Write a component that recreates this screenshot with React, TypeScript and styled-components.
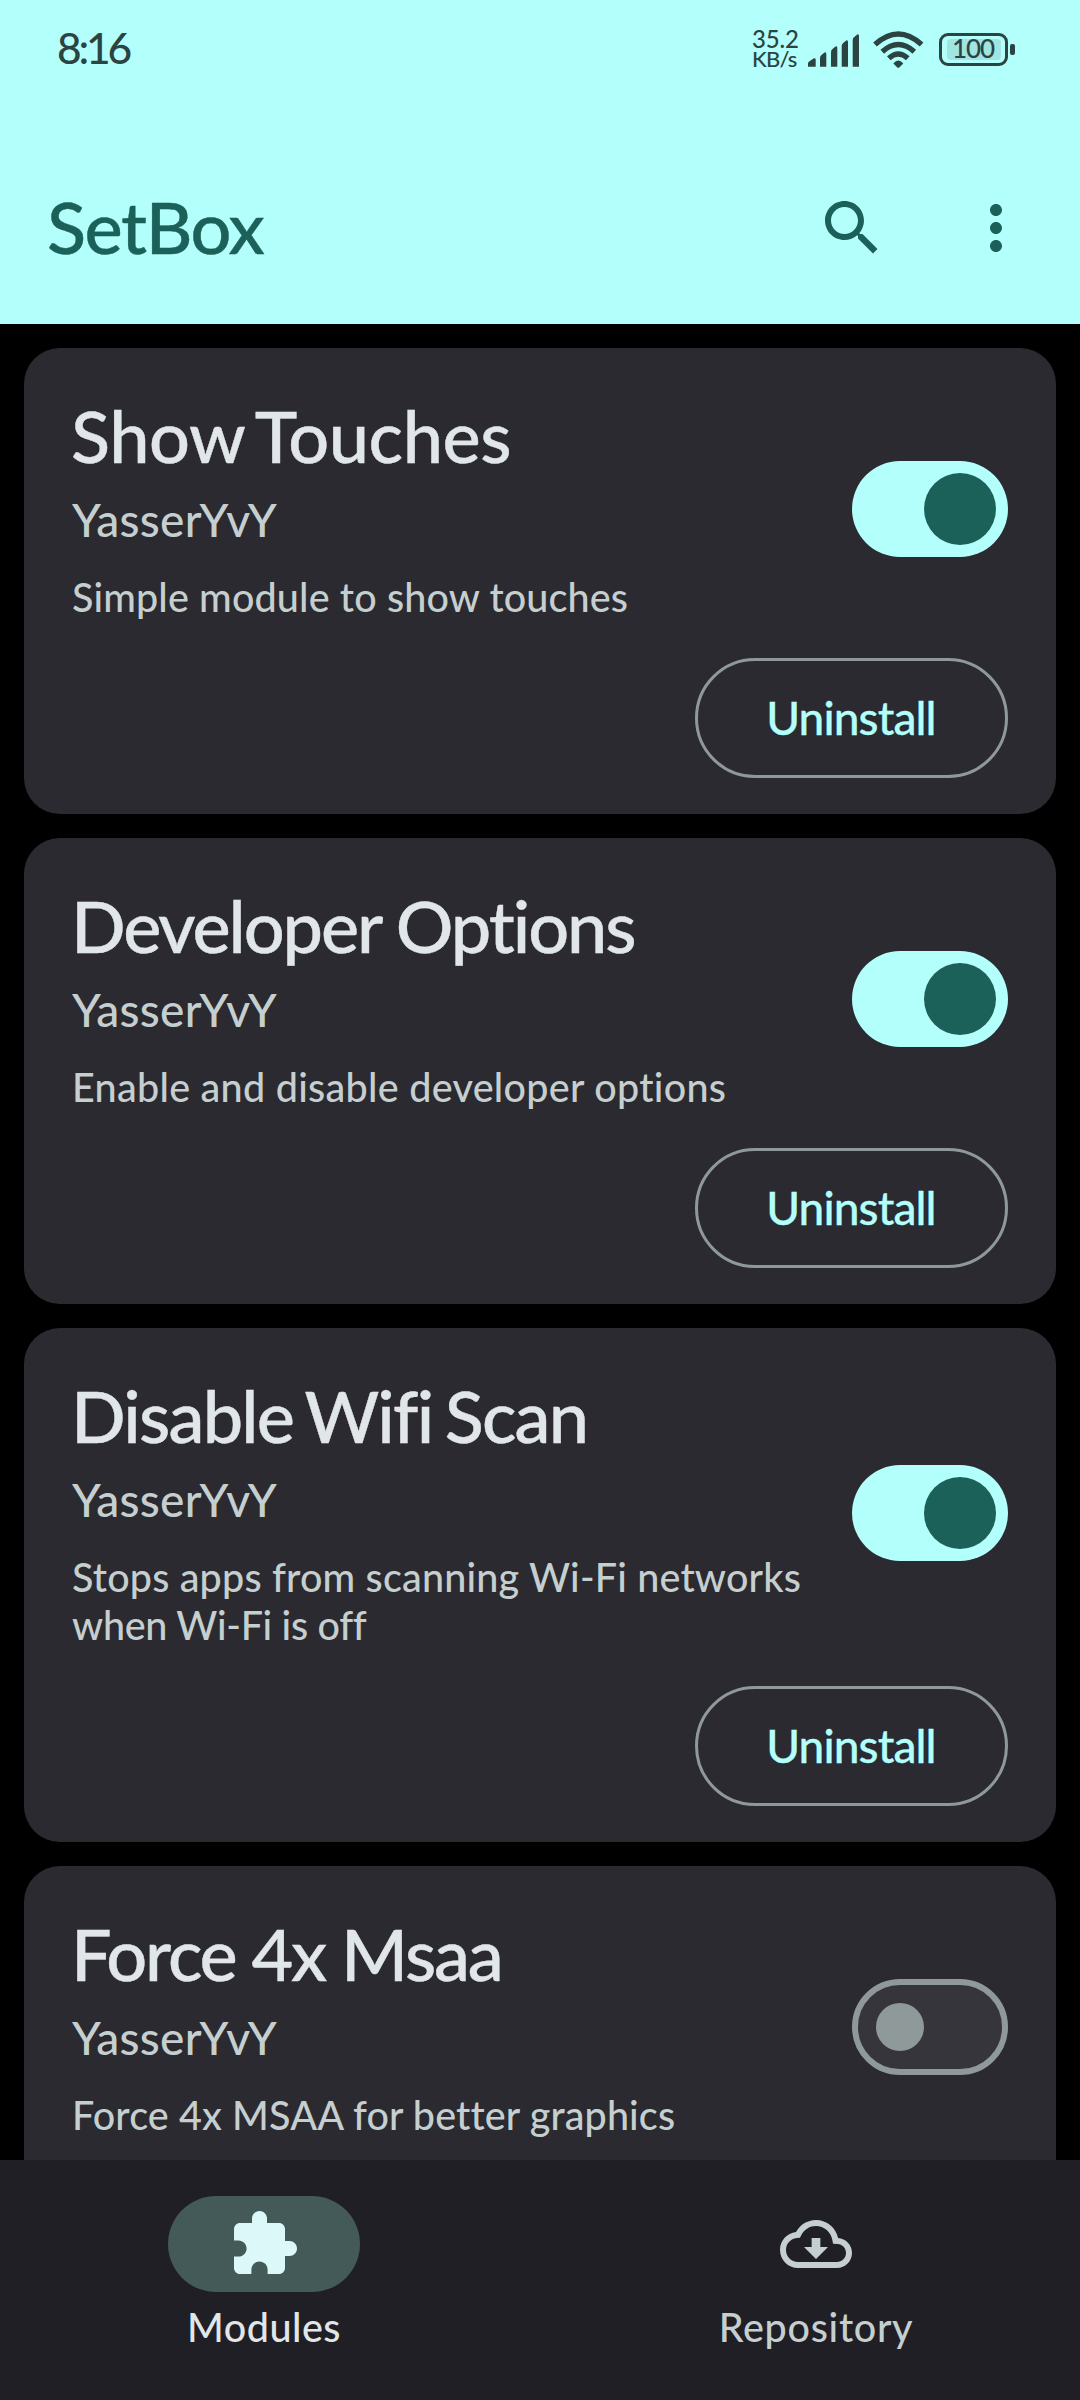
import React from "react";
import styled, { createGlobalStyle } from "styled-components";

const Global = createGlobalStyle`
  * { box-sizing: border-box; }
  body { margin: 0; background: #000; font-family: Lato, "Noto Sans", sans-serif; font-weight: 500; }
`;

const Screen = styled.div`
  display: flex;
  flex-direction: column;
  width: 1080px;
  height: 2400px;
  overflow: hidden;
  background: #000;
`;

const Header = styled.header`
  flex: none;
  height: 324px;
  background: #b3fffb;
`;

const StatusBar = styled.div`
  display: flex;
  align-items: center;
  height: 99px;
  padding: 0 65px 0 57px;
  color: #2b4442;
`;

const Clock = styled.span`
  flex: 1;
  padding-bottom: 3px;
  font-size: 42.5px;
  line-height: 52px;
  letter-spacing: -3.2px;
`;

const NetSpeed = styled.div`
  display: flex;
  flex-direction: column;
  width: 56px;
  padding-bottom: 2px;
`;

const NetValue = styled.span`
  font-size: 24px;
  line-height: 20px;
  letter-spacing: -0.2px;
`;

const NetUnit = styled.span`
  font-size: 22px;
  line-height: 20px;
  letter-spacing: -0.8px;
`;

const StatusIcons = styled.svg`
  display: block;
  flex: none;
`;

const Battery = styled.div`
  display: flex;
  align-items: center;
  gap: 2px;
  margin-left: 15px;

  &::after {
    content: "";
    width: 5px;
    height: 11px;
    border-radius: 2px;
    background: #2b4442;
  }
`;

const BatteryShell = styled.div`
  width: 69px;
  height: 33px;
  padding: 3px 4px 3px 5px;
  border: 3px solid #2b4442;
  border-radius: 9px;
`;

const BatteryFill = styled.div`
  display: flex;
  align-items: flex-start;
  justify-content: center;
  height: 21px;
  padding-right: 2px;
  border-radius: 4px;
  background: #a1e5e2;
  font-size: 26px;
  letter-spacing: -1.1px;
  line-height: 19px;
`;

const AppBar = styled.div`
  display: flex;
  align-items: center;
  gap: 72px;
  height: 192px;
  margin-top: 33px;
  padding: 0 48px 0 47px;
  color: #1b6159;
`;

const AppTitle = styled.h1`
  flex: 1;
  margin: 0;
  padding-bottom: 4px;
  font-size: 72px;
  line-height: 84px;
  font-weight: 500;
  letter-spacing: -1.4px;
  -webkit-text-stroke: 0.4px currentColor;
`;

const Icon = styled.svg`
  display: block;
  width: 72px;
  height: 72px;
  fill: currentColor;
`;

const List = styled.main`
  flex: 1;
  min-height: 0;
  display: flex;
  flex-direction: column;
  gap: 24px;
  padding: 24px 24px 0;
  overflow: hidden;
`;

const Card = styled.article`
  flex: none;
  display: flex;
  flex-direction: column;
  gap: 36px;
  min-height: 466px;
  padding: 48px 48px 36px;
  border-radius: 36px;
  background: #2b2a30;
`;

const CardBody = styled.div`
  display: flex;
  align-items: center;
  justify-content: space-between;
`;

const CardTitle = styled.h2<{ $track: number; $word: number }>`
  margin: 0 0 0 -1px;
  font-size: 72px;
  line-height: 78px;
  font-weight: 500;
  color: #e1e6e9;
  letter-spacing: ${(p) => p.$track}px;
  word-spacing: ${(p) => p.$word}px;
  white-space: nowrap;
  -webkit-text-stroke: 0.4px currentColor;
`;

const Author = styled.div`
  margin-top: 16px;
  font-size: 46px;
  line-height: 60px;
  letter-spacing: 0.3px;
  color: #c5cfcf;
`;

const Description = styled.div`
  display: flex;
  flex-direction: column;
  padding: 23px 0 1px;
  font-size: 39.5px;
  line-height: 48px;
  color: #c5cfcf;
`;

const DescriptionLine = styled.span<{ $track: number }>`
  letter-spacing: ${(p) => p.$track}px;
  white-space: nowrap;
`;

const Switch = styled.button<{ $on: boolean }>`
  flex: none;
  display: flex;
  align-items: center;
  justify-content: ${(p) => (p.$on ? "flex-end" : "flex-start")};
  width: 156px;
  height: 96px;
  padding: 0 ${(p) => (p.$on ? 12 : 18)}px;
  border: ${(p) => (p.$on ? "0" : "6px solid #8f9999")};
  border-radius: 48px;
  background: ${(p) => (p.$on ? "#b3fffb" : "#36353b")};
`;

const Thumb = styled.span<{ $on: boolean }>`
  width: ${(p) => (p.$on ? 72 : 48)}px;
  height: ${(p) => (p.$on ? 72 : 48)}px;
  border-radius: 50%;
  background: ${(p) => (p.$on ? "#1b6159" : "#8f9999")};
`;

const UninstallButton = styled.button`
  align-self: flex-end;
  width: 313px;
  height: 120px;
  padding: 0 1px 0 0;
  border: 3px solid #8f9999;
  border-radius: 60px;
  background: transparent;
  color: #b3fffb;
  font: 500 46px/56px Lato, "Noto Sans", sans-serif;
  letter-spacing: -0.9px;
  -webkit-text-stroke: 0.3px currentColor;
`;

const NavBar = styled.nav`
  flex: none;
  display: flex;
  gap: 24px;
  height: 240px;
  background: #201f25;
`;

const NavItem = styled.div<{ $active?: boolean; $track: number }>`
  display: flex;
  flex-direction: column;
  align-items: center;
  gap: 11px;
  width: 528px;
  padding-top: 36px;
  font-size: 39.5px;
  line-height: 48px;
  letter-spacing: ${(p) => p.$track}px;
  color: ${(p) => (p.$active ? "#e1e6e9" : "#c5cfcf")};
`;

const NavPill = styled.div<{ $active?: boolean }>`
  display: flex;
  align-items: center;
  justify-content: center;
  width: 192px;
  height: 96px;
  border-radius: 48px;
  background: ${(p) => (p.$active ? "#435a59" : "transparent")};
  color: ${(p) => (p.$active ? "#dcf8f8" : "#c5cfcf")};
`;

type Module = {
  title: string;
  track: number;
  word: number;
  lines: { text: string; track: number }[];
  on: boolean;
};

const modules: Module[] = [
  {
    title: "Show Touches",
    track: -0.4,
    word: -5,
    lines: [{ text: "Simple module to show touches", track: 0.14 }],
    on: true,
  },
  {
    title: "Developer Options",
    track: -2.1,
    word: 0,
    lines: [{ text: "Enable and disable developer options", track: 0.28 }],
    on: true,
  },
  {
    title: "Disable Wifi Scan",
    track: -1.8,
    word: -4,
    lines: [
      { text: "Stops apps from scanning Wi-Fi networks", track: 0.18 },
      { text: "when Wi-Fi is off", track: -0.3 },
    ],
    on: true,
  },
  {
    title: "Force 4x Msaa",
    track: -2.2,
    word: 0,
    lines: [{ text: "Force 4x MSAA for better graphics", track: 0.12 }],
    on: false,
  },
];

export default function App() {
  return (
    <Screen>
      <Global />
      <Header>
        <StatusBar>
          <Clock>8:16</Clock>
          <NetSpeed>
            <NetValue>35.2</NetValue>
            <NetUnit>KB/s</NetUnit>
          </NetSpeed>
          <StatusIcons width="116" height="39" viewBox="0 0 116 39" fill="#2b4442">
            <path d="M0 36.7V33.5Q0 32 1.5 31.3L5.5 28.6Q7.7 27.7 7.7 29.8V36.7Z" />
            <path d="M12 36.7V28Q12 26 13.5 25L16.5 22.5Q18.3 21.7 18.3 24V36.7Z" />
            <path d="M23 36.7V22Q23 20 24.5 19L27.5 16.5Q29.3 15.7 29.3 18V36.7Z" />
            <path d="M33.7 36.7V16Q33.7 14 35.2 13L38.2 10.5Q40 9.7 40 12V36.7Z" />
            <path d="M44.7 36.7V10Q44.7 8 46.2 7L49.2 4.5Q51 3.7 51 6V36.7Z" />
            <g fill="none" stroke="#2b4442" strokeWidth="5.4">
              <path d="M67 14.5Q90.3 -6.5 113.6 14.5" />
              <path d="M74.3 21.7Q90.3 7.3 106.3 21.7" />
              <path d="M80.8 28.3Q90.3 19.7 99.8 28.3" />
            </g>
            <path d="M85.3 33.5Q90.3 27.5 95.3 33.5L91.5 37.3Q90.3 38.3 89.1 37.3Z" />
          </StatusIcons>
          <Battery>
            <BatteryShell>
              <BatteryFill>100</BatteryFill>
            </BatteryShell>
          </Battery>
        </StatusBar>
        <AppBar>
          <AppTitle>SetBox</AppTitle>
          <Icon viewBox="0 0 24 24">
            <path d="M15.5 14h-.79l-.28-.27C15.41 12.59 16 11.11 16 9.5 16 5.91 13.09 3 9.5 3S3 5.91 3 9.5 5.91 16 9.5 16c1.61 0 3.09-.59 4.23-1.57l.27.28v.79l5 4.99L20.49 19l-4.99-5zm-6 0C7.01 14 5 11.99 5 9.5S7.01 5 9.5 5 14 7.01 14 9.5 11.99 14 9.5 14z" />
          </Icon>
          <Icon viewBox="0 0 24 24">
            <path d="M12 8c1.1 0 2-.9 2-2s-.9-2-2-2-2 .9-2 2 .9 2 2 2zm0 2c-1.1 0-2 .9-2 2s.9 2 2 2 2-.9 2-2-.9-2-2-2zm0 6c-1.1 0-2 .9-2 2s.9 2 2 2 2-.9 2-2-.9-2-2-2z" />
          </Icon>
        </AppBar>
      </Header>
      <List>
        {modules.map((m) => (
          <Card key={m.title}>
            <CardBody>
              <div>
                <CardTitle $track={m.track} $word={m.word}>
                  {m.title}
                </CardTitle>
                <Author>YasserYvY</Author>
                <Description>
                  {m.lines.map((line) => (
                    <DescriptionLine key={line.text} $track={line.track}>
                      {line.text}
                    </DescriptionLine>
                  ))}
                </Description>
              </div>
              <Switch $on={m.on}>
                <Thumb $on={m.on} />
              </Switch>
            </CardBody>
            {m.on && <UninstallButton>Uninstall</UninstallButton>}
          </Card>
        ))}
      </List>
      <NavBar>
        <NavItem $active $track={0.5}>
          <NavPill $active>
            <Icon viewBox="0 0 24 24">
              <path d="M20.5 11H19V7c0-1.1-.9-2-2-2h-4V3.5C13 2.12 11.88 1 10.5 1S8 2.12 8 3.5V5H4c-1.1 0-1.99.9-1.99 2v3.8H3.5c1.49 0 2.7 1.21 2.7 2.7s-1.21 2.7-2.7 2.7H2V20c0 1.1.9 2 2 2h3.8v-1.5c0-1.49 1.21-2.7 2.7-2.7 1.49 0 2.7 1.21 2.7 2.7V22H17c1.1 0 2-.9 2-2v-4h1.5c1.38 0 2.5-1.12 2.5-2.5S21.88 11 20.5 11z" />
            </Icon>
          </NavPill>
          Modules
        </NavItem>
        <NavItem $track={0.7}>
          <NavPill>
            <Icon viewBox="0 0 24 24">
              <path d="M19.35 10.04C18.67 6.59 15.64 4 12 4 9.11 4 6.6 5.64 5.35 8.04 2.34 8.36 0 10.91 0 14c0 3.31 2.69 6 6 6h13c2.76 0 5-2.24 5-5 0-2.64-2.05-4.78-4.65-4.96zM19 18H6c-2.21 0-4-1.79-4-4 0-2.05 1.53-3.76 3.56-3.97l1.07-.11.5-.95C8.08 7.14 9.94 6 12 6c2.62 0 4.88 1.86 5.39 4.43l.3 1.5 1.53.11c1.56.1 2.78 1.41 2.78 2.96 0 1.65-1.35 3-3 3zm-5.55-8h-2.9v3H8l4 4 4-4h-2.55z" />
            </Icon>
          </NavPill>
          Repository
        </NavItem>
      </NavBar>
    </Screen>
  );
}
